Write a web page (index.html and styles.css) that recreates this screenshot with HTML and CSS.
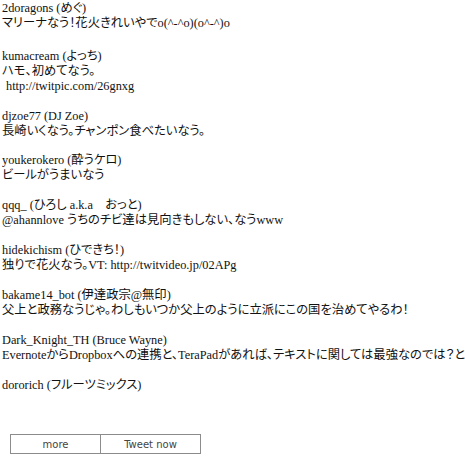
FILE: index.html
```
<!DOCTYPE html>
<html>
<head>
<meta charset="utf-8">
<link rel="stylesheet" href="styles.css">
</head>
<body>
<div class="timeline">
  <div class="tweet first"><div class="line">2doragons (めぐ)</div><div class="line">マリーナなう！花火きれいやでo(^-^o)(o^-^)o</div></div>
  <div class="tweet"><div class="line">kumacream (よっち)</div><div class="line">ハモ、初めてなう。</div><div class="line indent">http://twitpic.com/26gnxg</div></div>
  <div class="tweet"><div class="line">djzoe77 (DJ Zoe)</div><div class="line">長崎いくなう。チャンポン食べたいなう。</div></div>
  <div class="tweet"><div class="line">youkerokero (酔うケロ)</div><div class="line">ビールがうまいなう</div></div>
  <div class="tweet"><div class="line">qqq_ (ひろし a.k.a　おっと)</div><div class="line">@ahannlove うちのチビ達は見向きもしない、なうwww</div></div>
  <div class="tweet"><div class="line">hidekichism (ひできち！)</div><div class="line">独りで花火なう。VT: http://twitvideo.jp/02APg</div></div>
  <div class="tweet"><div class="line">bakame14_bot (伊達政宗@無印)</div><div class="line">父上と政務なうじゃ。わしもいつか父上のように立派にこの国を治めてやるわ！</div></div>
  <div class="tweet"><div class="line">Dark_Knight_TH (Bruce Wayne)</div><div class="line">EvernoteからDropboxへの連携と、TeraPadがあれば、テキストに関しては最強なのでは？と!</div></div>
  <div class="tweet"><div class="line">dororich (フルーツミックス)</div></div>
</div>
<div class="buttons">
  <button class="btn btn-more">more</button>
  <button class="btn btn-tweet">Tweet now</button>
</div>
</body>
</html>
```
FILE: styles.css
```
html, body {
  margin: 0;
  padding: 0;
  background: #fff;
  overflow: hidden;
}
body {
  width: 465px;
  height: 465px;
  font-family: "Liberation Serif", "Noto Sans CJK JP", serif;
  font-size: 12.3px;
  font-feature-settings: "palt";
  color: #111;
}
.timeline {
  padding: 1px 0 0 2px;
}
.tweet {
  margin-bottom: 14.95px;
}
.tweet.first {
  margin-bottom: 18px;
}
.line {
  line-height: 14.95px;
  height: 14.95px;
  white-space: nowrap;
  overflow: hidden;
}
.indent {
  padding-left: 4px;
}
.buttons {
  display: flex;
  margin: 42px 0 0 10px;
}
.btn {
  height: 20px;
  margin: 0;
  padding: 0;
  border: 1px solid #8c8c8c;
  background: #fff;
  font-family: "DejaVu Sans", sans-serif;
  font-size: 10px;
  color: #444;
}
.btn-more {
  width: 91px;
}
.btn-tweet {
  width: 100px;
  border-left: none;
}
```
